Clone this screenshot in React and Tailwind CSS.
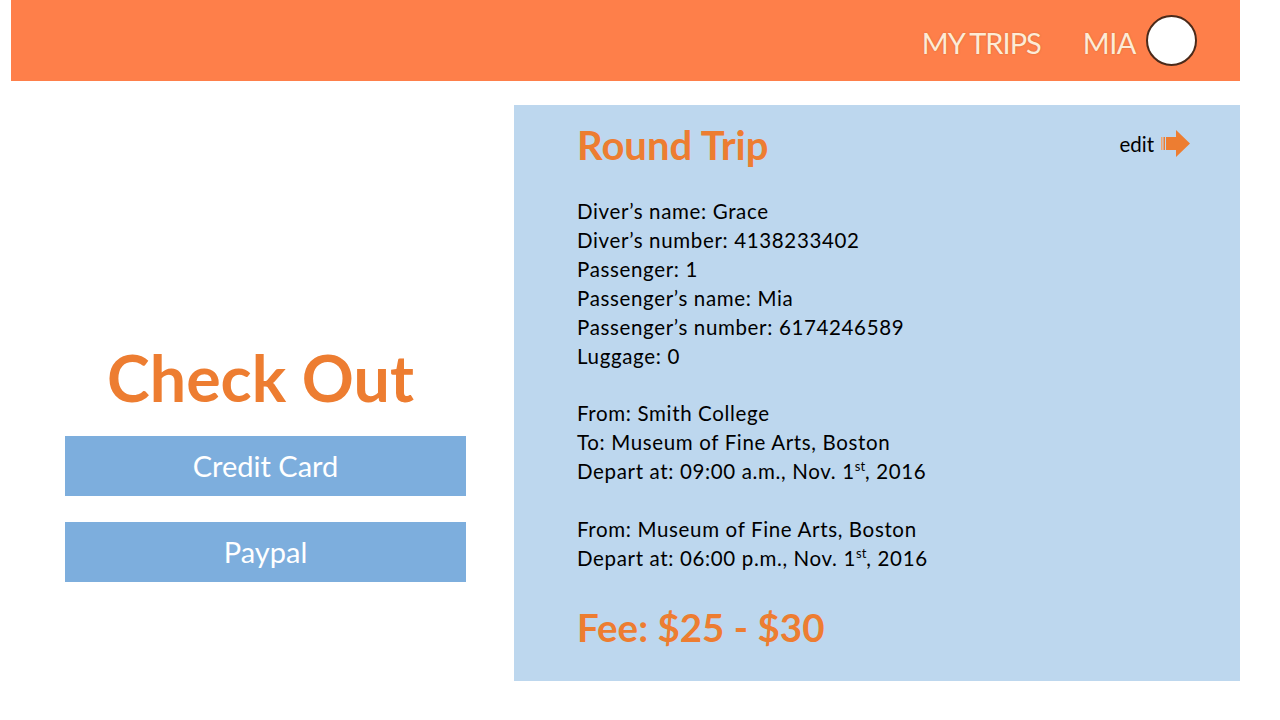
import React from 'react';

function EditArrow() {
  return (
    <svg width="30" height="28" viewBox="0 0 30 28" className="block">
      <rect x="0" y="7" width="1.5" height="13" fill="#f4a46c" />
      <rect x="2.5" y="7" width="1.5" height="13" fill="#ed7d31" />
      <path d="M5 7 H15 V0 L29 13.5 L15 27 V20 H5 Z" fill="#ed7d31" />
    </svg>
  );
}

const details = [
  'Diver’s name: Grace',
  'Diver’s number: 4138233402',
  'Passenger: 1',
  'Passenger’s name: Mia',
  'Passenger’s number: 6174246589',
  'Luggage: 0',
];

function Ordinal({ day }) {
  return (
    <>
      {day}
      <span className="text-[13px] leading-none relative -top-[8px] tracking-normal">st</span>
    </>
  );
}

export default function App() {
  return (
    <div
      className="w-[1280px] h-[720px] bg-white overflow-hidden"
      style={{ fontFamily: 'Lato, "Open Sans", sans-serif' }}
    >
      {/* Top bar */}
      <header className="ml-[11px] w-[1229px] h-[81px] bg-[#fe7f4a] flex items-center justify-end pr-[43px] pt-[4px]">
        <span className="text-[29px] text-[#fdebd6] tracking-[-1px] mr-[42px] [text-shadow:0_0_2px_rgba(120,60,20,0.35)]">
          MY TRIPS
        </span>
        <span className="text-[29px] text-[#fdebd6] tracking-[-0.5px] mr-[10px] [text-shadow:0_0_2px_rgba(120,60,20,0.35)]">
          MIA
        </span>
        <div className="w-[51px] h-[51px] -mt-[4px] rounded-full bg-white border-2 border-[#4a2a1a]" />
      </header>

      <div className="ml-[11px] mt-[24px] flex">
        {/* Payment column */}
        <div className="w-[503px] pt-[234px]">
          <h1 className="text-center text-[64.5px] font-bold leading-[76px] text-[#ed7d31] -ml-[4px]">
            Check Out
          </h1>
          <div className="ml-[54px] mt-[21px] w-[401px] flex flex-col gap-[26px]">
            <button className="h-[60px] bg-[#7daedd] text-white text-[29px]">Credit Card</button>
            <button className="h-[60px] bg-[#7daedd] text-white text-[29px]">Paypal</button>
          </div>
        </div>

        {/* Trip summary */}
        <section className="w-[726px] h-[576px] bg-[#bdd7ee] pl-[63px] pr-[49px] pt-[16px]">
          <div className="flex items-start justify-between">
            <h2 className="text-[40px] font-bold leading-[48px] text-[#ed7d31]">Round Trip</h2>
            <div className="flex items-center gap-[7px] pt-[8px]">
              <span className="text-[20.5px] text-black">edit</span>
              <EditArrow />
            </div>
          </div>

          <div className="mt-[28px] text-[20.5px] leading-[28.9px] tracking-[0.65px] text-black">
            {details.map((line) => (
              <p key={line}>{line}</p>
            ))}
            <p className="h-[28.9px]" />
            <p>From: Smith College</p>
            <p>To: Museum of Fine Arts, Boston</p>
            <p>
              Depart at: 09:00 a.m., Nov. <Ordinal day="1" />, 2016
            </p>
            <p className="h-[28.9px]" />
            <p>From: Museum of Fine Arts, Boston</p>
            <p>
              Depart at: 06:00 p.m., Nov. <Ordinal day="1" />, 2016
            </p>
          </div>

          <p className="mt-[30px] text-[38.5px] font-bold leading-[48px] text-[#ed7d31]">Fee: $25 - $30</p>
        </section>
      </div>
    </div>
  );
}
